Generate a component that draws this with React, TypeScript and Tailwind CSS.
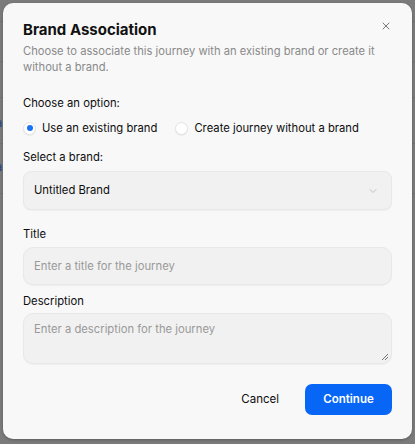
import { X, ChevronDown } from "lucide-react";

const font = { fontFamily: "Inter, 'Noto Sans', sans-serif" };

const BackgroundPage = () => (
  <div className="absolute inset-0 flex flex-col">
    <div className="h-[22px] border-b border-[#6f6f6f]" />
    <div className="h-[40px] border-b border-[#727272]" />
    <div className="h-[36px] border-b border-[#727272]" />
    <div className="h-[46px] border-b border-[#727272] flex items-end pb-[12px] text-[11px] text-[#1d3f8a]">
      <span className="-ml-[4px]">a</span>
    </div>
    <div className="h-[50px] border-b border-[#727272] flex items-end pb-[18px] text-[11px] text-[#1d3f8a]">
      <span className="-ml-[4px]">a</span>
    </div>
  </div>
);

const Radio = ({ checked, label }: { checked?: boolean; label: string }) => (
  <label className="flex items-center gap-[6px]">
    <span className="w-[13px] h-[13px] rounded-full bg-white border border-[#e3e3e3] shadow-[0_1px_1px_rgba(0,0,0,0.06)] flex items-center justify-center">
      {checked && <span className="w-[6px] h-[6px] rounded-full bg-[#1a73f5]" />}
    </span>
    <span>{label}</span>
  </label>
);

export default function App() {
  return (
    <div
      className="relative w-[415px] h-[444px] bg-[#7b7b7b] overflow-hidden p-[3px]"
      style={font}
    >
      <BackgroundPage />
      <div className="relative w-[409px] h-[436px] rounded-[10px] bg-[#f8f8f8] shadow-[0_1px_3px_rgba(0,0,0,0.25)] px-5 pt-[17px] text-[#0d0d0d] text-[11.25px]">
        <button className="absolute top-[17px] right-[20px] text-[#555]">
          <X size={12} strokeWidth={1.6} />
        </button>
        <h2 className="text-[15px] leading-[20px] font-bold text-[#111]">
          Brand Association
        </h2>
        <p className="mt-[3px] text-[11.2px] leading-[16px] text-[#8a8a8a]">
          Choose to associate this journey with an existing brand or create it
          <br />
          without a brand.
        </p>

        <div className="mt-[20px] leading-[16px]">Choose an option:</div>
        <div className="mt-[9px] flex items-center gap-[18px] leading-[16px]">
          <Radio checked label="Use an existing brand" />
          <Radio label="Create journey without a brand" />
        </div>

        <div className="mt-[13px] leading-[16px]">Select a brand:</div>
        <div className="mt-[6px] h-[39px] rounded-[8px] bg-[#f1f1f1] border border-[#e8e8e8] shadow-[0_1px_1px_rgba(0,0,0,0.04)] flex items-center justify-between pl-[10px] pr-[12px]">
          <span>Untitled Brand</span>
          <ChevronDown size={12} strokeWidth={1.5} className="text-[#b0b0b0]" />
        </div>

        <div className="mt-[16px] leading-[16px]">Title</div>
        <div className="mt-[5px] h-[38px] rounded-[10px] bg-[#f1f1f1] border border-[#e8e8e8] shadow-[0_1px_1px_rgba(0,0,0,0.04)] flex items-center px-[10px] text-[#999]">
          Enter a title for the journey
        </div>

        <div className="mt-[8px] leading-[16px]">Description</div>
        <div className="relative mt-[4px] h-[51px] rounded-[10px] bg-[#f1f1f1] border border-[#e8e8e8] shadow-[0_1px_1px_rgba(0,0,0,0.04)] px-[10px] pt-[7px] text-[#999] leading-[16px]">
          Enter a description for the journey
          <svg
            className="absolute right-[2px] bottom-[2px]"
            width="8"
            height="8"
            viewBox="0 0 8 8"
          >
            <path d="M7 1L1 7M7 4L4 7" stroke="#555" strokeWidth="0.8" />
          </svg>
        </div>

        <div className="mt-[20px] flex items-center justify-end gap-[26px]">
          <button className="text-[11.5px] text-[#0d0d0d]">Cancel</button>
          <button className="w-[87px] h-[31px] rounded-[7px] bg-[#0866f7] text-white font-semibold text-[11.5px]">
            Continue
          </button>
        </div>
      </div>
    </div>
  );
}
